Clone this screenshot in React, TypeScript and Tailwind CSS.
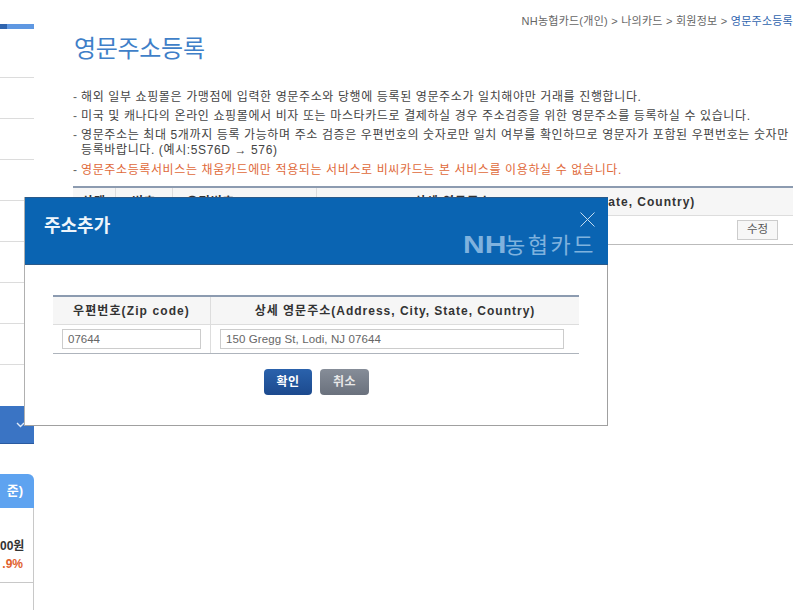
const font = "font-['Liberation_Sans','Noto_Sans_CJK_KR',sans-serif]";

function SideMenu() {
  return (
    <aside className="w-[34px] h-[610px] shrink-0 overflow-hidden">
      <div className="h-6" />
      <div className="flex h-[5px]">
        <div className="w-[7px] bg-[#2f64ae]" />
        <div className="flex-1 bg-[#5f98e2]" />
      </div>
      <div className="h-[49px] border-b border-[#dcdcdc]" />
      {[0, 1, 2, 3, 4, 5, 6].map((i) => (
        <div key={i} className="h-[41px] border-b border-[#dcdcdc]" />
      ))}
      <div className="h-[41px]" />
      <div className="h-[38px] bg-[#3a74c4] border-b border-[#2a5aa0] flex items-center justify-end pr-[9px]">
        <svg width="9" height="6" viewBox="0 0 9 6" fill="none" stroke="#dfeaf8" strokeWidth="1.4">
          <path d="M1 1l3.5 3.5L8 1" />
        </svg>
      </div>
      <div className="h-[30px]" />
      <div className="h-[34px] bg-[#5ea3f0] rounded-tr-[6px] flex items-center justify-end pr-[11px] text-[13px] font-bold text-white whitespace-nowrap">
        준)
      </div>
      <div className="h-[75px] border-r border-[#c8c8c8] border-b border-b-[#c8c8c8] pt-[29px] text-right pr-[10px] text-[12px] font-bold leading-[18px]">
        <div className="text-[#333333] whitespace-nowrap">00원</div>
        <div className="text-[#e0612e] whitespace-nowrap">.9%</div>
      </div>
      <div className="h-[27px] border-r border-[#c8c8c8]" />
    </aside>
  );
}

function NoticeList() {
  const items = [
    "해외 일부 쇼핑몰은 가맹점에 입력한 영문주소와 당행에 등록된 영문주소가 일치해야만 거래를 진행합니다.",
    "미국 및 캐나다의 온라인 쇼핑몰에서 비자 또는 마스타카드로 결제하실 경우 주소검증을 위한 영문주소를 등록하실 수 있습니다.",
    "영문주소는 최대 5개까지 등록 가능하며 주소 검증은 우편번호의 숫자로만 일치 여부를 확인하므로 영문자가 포함된 우편번호는 숫자만 등록바랍니다. (예시:5S76D → 576)",
  ];
  return (
    <ul className="text-[12px] leading-[15px] tracking-[0.62px] text-[#444444]">
      {items.map((t) => (
        <li key={t} className="flex mb-[4px]">
          <span className="w-2 shrink-0 text-[#666666]">-</span>
          <span>{t}</span>
        </li>
      ))}
      <li className="flex text-[#e0693a] mt-[5px]">
        <span className="w-2 shrink-0 text-[#666666]">-</span>
        <span>영문주소등록서비스는 채움카드에만 적용되는 서비스로 비씨카드는 본 서비스를 이용하실 수 없습니다.</span>
      </li>
    </ul>
  );
}

function AddressTable() {
  return (
    <div className="mt-[8px] border-t-2 border-[#8c9bb0] text-[12px]">
      <div className="flex h-[28px] bg-[#f6f6f6] border-b border-[#dddddd] font-bold text-[#333333] tracking-[1px]">
        <div className="w-[43px] border-r border-[#dddddd] flex items-center justify-center">상태</div>
        <div className="w-[57px] border-r border-[#dddddd] flex items-center justify-center">번호</div>
        <div className="w-[144px] border-r border-[#dddddd] flex items-center justify-center whitespace-nowrap">우편번호(Zip code)</div>
        <div className="flex-1 flex items-center justify-center whitespace-nowrap">상세 영문주소(Address, City, State, Country)</div>
      </div>
      <div className="flex h-[29px] items-center justify-end border-b border-[#bbbbbb] pr-[15px]">
        <button className="w-[41px] h-[20px] border border-[#cccccc] bg-[#f7f7f7] text-[11.5px] text-[#555555]">수정</button>
      </div>
    </div>
  );
}

function AddModal() {
  return (
    <div className="absolute left-6 top-[197px] w-[584px] h-[229px] bg-white border border-[#a0a0a0] border-t-0 border-l-[#b0b0b0]">
      <div className="relative h-[68px] bg-[#0a64b2] border-y border-[#2a5a8a] -mr-px">
        <h2 className="absolute left-[19px] top-[18px] text-[18px] font-bold leading-5 text-[#eef5fb]">주소추가</h2>
        <button className="absolute right-[13px] top-[14px]">
          <svg width="15" height="15" viewBox="0 0 15 15" fill="none" stroke="#c3dcf0" strokeWidth="1">
            <path d="M0.5 0.5l14 14M14.5 0.5l-14 14" />
          </svg>
        </button>
        <div className="absolute right-[12px] top-[35px] text-[22px] leading-6 text-[#7fb2de] whitespace-nowrap">
          <span className="inline-block w-[42px] origin-left scale-x-[1.25] text-[24px] font-bold">NH</span>
          <span className="tracking-[2.5px]">농협카드</span>
        </div>
      </div>
      <div className="pt-[30px] pl-7 pr-7">
        <div className="border-t-2 border-[#8c9bb0] text-[12px]">
          <div className="flex h-[28px] bg-[#f6f6f6] border-b border-[#dddddd] font-bold text-[#333333] tracking-[1px]">
            <div className="w-[158px] border-r border-[#dddddd] flex items-center justify-center whitespace-nowrap tracking-[1.1px]">우편번호(Zip code)</div>
            <div className="flex-1 flex items-center justify-center whitespace-nowrap">상세 영문주소(Address, City, State, Country)</div>
          </div>
          <div className="flex h-[29px] items-center border-b border-[#aeb4bc] text-[#666666]">
            <div className="w-[158px] h-full border-r border-[#dddddd] flex items-center pl-[9px]">
              <input readOnly value="07644" className="w-[139px] h-[20px] border border-[#cccccc] px-[5px] text-[11.5px] outline-none" />
            </div>
            <div className="flex-1 flex items-center pl-[9px]">
              <input readOnly value="150 Gregg St, Lodi, NJ 07644" className="w-[344px] h-[20px] border border-[#cccccc] px-[5px] text-[11.5px] tracking-[0.1px] outline-none" />
            </div>
          </div>
        </div>
        <div className="flex justify-center gap-2 mt-[15px] pl-[1px]">
          <button className="w-[48px] h-[26px] rounded-[4px] bg-gradient-to-b from-[#2a62ac] to-[#1c4a8e] text-[12px] font-bold text-white tracking-[0.5px]">확인</button>
          <button className="w-[49px] h-[26px] rounded-[4px] bg-gradient-to-b from-[#868d98] to-[#6a717d] text-[12px] font-bold text-[#e8e8e8] tracking-[0.5px]">취소</button>
        </div>
      </div>
    </div>
  );
}

export default function App() {
  return (
    <div className={`relative w-[800px] h-[610px] overflow-hidden bg-white flex ${font}`}>
      <SideMenu />
      <main className="ml-[39px] w-[720px] pt-[14px]">
        <div className="text-right text-[11px] leading-[14px] tracking-[0.25px] text-[#666666] whitespace-nowrap">
          NH농협카드(개인) &gt; 나의카드 &gt; 회원정보 &gt; <span className="text-[#2f64ae]">영문주소등록</span>
        </div>
        <h1 className="mt-[7px] text-[24px] leading-[28px] tracking-[-0.3px] text-[#3f7fc8] pl-px">영문주소등록</h1>
        <div className="mt-[27px]">
          <NoticeList />
          <AddressTable />
        </div>
      </main>
      <AddModal />
    </div>
  );
}
